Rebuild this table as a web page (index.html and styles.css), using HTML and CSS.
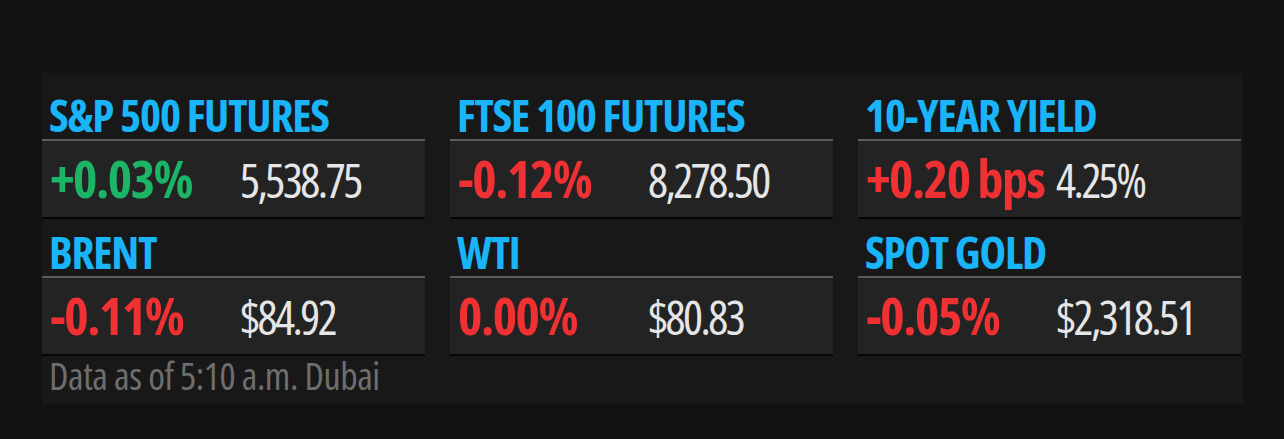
FILE: index.html
```html
<!DOCTYPE html>
<html lang="en">
<head>
<meta charset="utf-8">
<title>Markets</title>
<link rel="stylesheet" href="styles.css">
</head>
<body>
<section class="panel">
  <div class="grid">
    <div class="tile">
      <div class="label">S&amp;P 500 FUTURES</div>
      <div class="row"><span class="chg up">+0.03%</span><span class="val">5,538.75</span></div>
    </div>
    <div class="tile">
      <div class="label">FTSE 100 FUTURES</div>
      <div class="row"><span class="chg down">-0.12%</span><span class="val">8,278.50</span></div>
    </div>
    <div class="tile">
      <div class="label">10-YEAR YIELD</div>
      <div class="row"><span class="chg down">+0.20 bps</span><span class="val">4.25%</span></div>
    </div>
    <div class="tile">
      <div class="label">BRENT</div>
      <div class="row"><span class="chg down">-0.11%</span><span class="val">$84.92</span></div>
    </div>
    <div class="tile">
      <div class="label">WTI</div>
      <div class="row"><span class="chg down">0.00%</span><span class="val">$80.83</span></div>
    </div>
    <div class="tile">
      <div class="label">SPOT GOLD</div>
      <div class="row"><span class="chg down">-0.05%</span><span class="val">$2,318.51</span></div>
    </div>
  </div>
  <div class="note">Data as of 5:10 a.m. Dubai</div>
</section>
</body>
</html>
```
FILE: styles.css
```css
html, body {
  margin: 0;
  padding: 0;
  background: #121212;
}
body {
  font-family: "Open Sans", "Roboto", sans-serif;
  font-stretch: 75%;
}
.panel {
  margin: 73px 0 0 42px;
  width: 1201px;
  background: #181818;
  padding: 9px 0 10px 0;
  box-sizing: border-box;
}
.grid {
  display: grid;
  grid-template-columns: 383px 383px 383px;
  column-gap: 25px;
}
.tile {
  display: flex;
  flex-direction: column;
}
.label {
  height: 57px;
  box-sizing: border-box;
  display: flex;
  align-items: flex-end;
  padding: 0 0 2px 7px;
  font-size: 45px;
  line-height: 45px;
  font-weight: 700;
  letter-spacing: -1.2px;
  color: #1ab4f8;
  white-space: nowrap;
}
.row {
  height: 80px;
  box-sizing: border-box;
  background: #232323;
  border-top: 2px solid #5c5c5c;
  border-bottom: 2px solid #050505;
  display: flex;
  align-items: baseline;
  padding: 11px 0 0 8px;
  white-space: nowrap;
}
.chg {
  display: inline-block;
  min-width: 180px;
  margin-right: 10px;
  font-size: 52px;
  line-height: 52px;
  font-weight: 700;
  letter-spacing: -1.5px;
}
.up { color: #1cb467; }
.down { color: #ef3134; }
.val {
  font-size: 47px;
  line-height: 47px;
  font-weight: 400;
  letter-spacing: -2.5px;
  color: #e6e6e6;
}
.note {
  padding-left: 7px;
  font-size: 38px;
  line-height: 38px;
  font-weight: 400;
  letter-spacing: -0.45px;
  color: #6e6e6e;
  white-space: nowrap;
}
```
